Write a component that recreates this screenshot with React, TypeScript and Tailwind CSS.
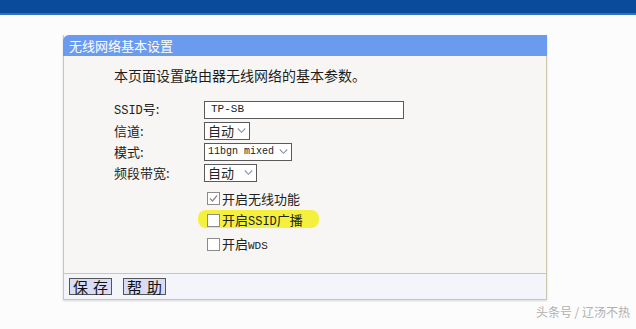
import React from "react";

const cjk = { fontFamily: '"Noto Sans CJK SC", "Noto Sans", sans-serif' };
const mono = { fontFamily: '"Liberation Mono", "Noto Sans CJK SC", monospace' };

const Chevron = () => (
  <svg width="9" height="7" viewBox="0 0 9 7" className="ml-auto shrink-0">
    <path d="M0.8 1.5 L4.5 5.3 L8.2 1.5" fill="none" stroke="#8a94a8" strokeWidth="1.1" />
  </svg>
);

const Select = ({ label, width, monoText }: { label: string; width: string; monoText?: boolean }) => (
  <div
    className={`flex items-center gap-[3px] whitespace-nowrap h-[18px] border border-[#5a5a5a] bg-white pl-[3px] pr-[3px] text-[#222] ${width} ${
      monoText ? "text-[10px]" : "text-[13px]"
    }`}
    style={monoText ? mono : cjk}
  >
    <span className="leading-none">{label}</span>
    <Chevron />
  </div>
);

const Row = ({ label, children }: { label: React.ReactNode; children: React.ReactNode }) => (
  <div className="flex items-center h-[21px]">
    <div className="w-[90px] text-[13px] text-[#222]">{label}</div>
    {children}
  </div>
);

const Check = ({ checked, label }: { checked?: boolean; label: React.ReactNode }) => (
  <div className="flex items-center gap-[2px] text-[13px] text-[#222] whitespace-nowrap">
    <div className="w-[13px] h-[13px] border border-[#8c8c8c] bg-white flex items-center justify-center">
      {checked && (
        <svg width="9" height="9" viewBox="0 0 9 9">
          <path d="M1 4.5 L3.5 7 L8 1.5" fill="none" stroke="#8d8d8d" strokeWidth="1.3" />
        </svg>
      )}
    </div>
    <span className="leading-none">{label}</span>
  </div>
);

const Btn = ({ children }: { children: React.ReactNode }) => (
  <button className="h-[17px] w-[43px] border border-[#555] bg-[#d9dcf3] text-[15px] leading-none text-[#111] flex items-center justify-center whitespace-nowrap gap-[5px]">
    {children}
  </button>
);

export default function App() {
  return (
    <div className="w-[636px] h-[329px] bg-[#fcfcfc] overflow-hidden relative" style={cjk}>
      <div className="h-[15px] bg-[#0b4b9c] border-b-2 border-[#2f72c4]" />

      <div className="ml-[63px] mt-[20px] w-[484px] border-x border-b border-[#cbc8ad] shadow-[0_1px_2px_rgba(0,0,0,0.15)]">
        <div className="h-[21px] bg-[#6b9bef] rounded-tl-[6px] text-white text-[13px] pl-[6px] flex items-center -ml-px -mr-px">
          无线网络基本设置
        </div>

        <div className="h-[217px] bg-[#f7f6f4] pl-[50px] pt-[10px]">
          <div className="text-[14px] text-[#1e1e1e] leading-[18px]">本页面设置路由器无线网络的基本参数。</div>

          <div className="mt-[15px]">
            <Row label={<><span style={mono} className="text-[12px]">SSID</span>号:</>}>
              <div
                className="h-[18px] w-[200px] border border-[#5a5a5a] bg-white pl-[6px] text-[11px] text-[#222] flex items-center"
                style={mono}
              >
                TP-SB
              </div>
            </Row>
            <Row label="信道:">
              <Select label="自动" width="w-[46px]" />
            </Row>
            <Row label="模式:">
              <Select label="11bgn mixed" width="w-[88px]" monoText />
            </Row>
            <Row label="频段带宽:">
              <Select label="自动" width="w-[53px]" />
            </Row>
          </div>

          <div className="ml-[93px] mt-[9px] flex flex-col gap-[8px]">
            <Check checked label="开启无线功能" />
            <div className="relative">
              <div className="absolute left-[-9px] top-[-3px] w-[121px] h-[18px] rounded-[8px] bg-[#f3ee1c] opacity-85" />
              <div className="relative">
                <Check
                  label={
                    <>
                      开启<span style={mono} className="text-[12px]">SSID</span>广播
                    </>
                  }
                />
              </div>
            </div>
            <div className="mt-[1px]">
              <Check
                label={
                  <>
                    开启<span style={mono} className="text-[11px]">WDS</span>
                  </>
                }
              />
            </div>
          </div>
        </div>

        <div className="h-[26px] bg-[#f4f5fa] border-t border-[#cbc8ad] flex items-center pl-[5px] gap-[11px]">
          <Btn>
            <span>保</span>
            <span>存</span>
          </Btn>
          <Btn>
            <span>帮</span>
            <span>助</span>
          </Btn>
        </div>
      </div>

      <div className="absolute right-[6px] bottom-[8px] text-[12px] text-[#b0b0b0]">头条号 / 辽汤不热</div>
    </div>
  );
}
